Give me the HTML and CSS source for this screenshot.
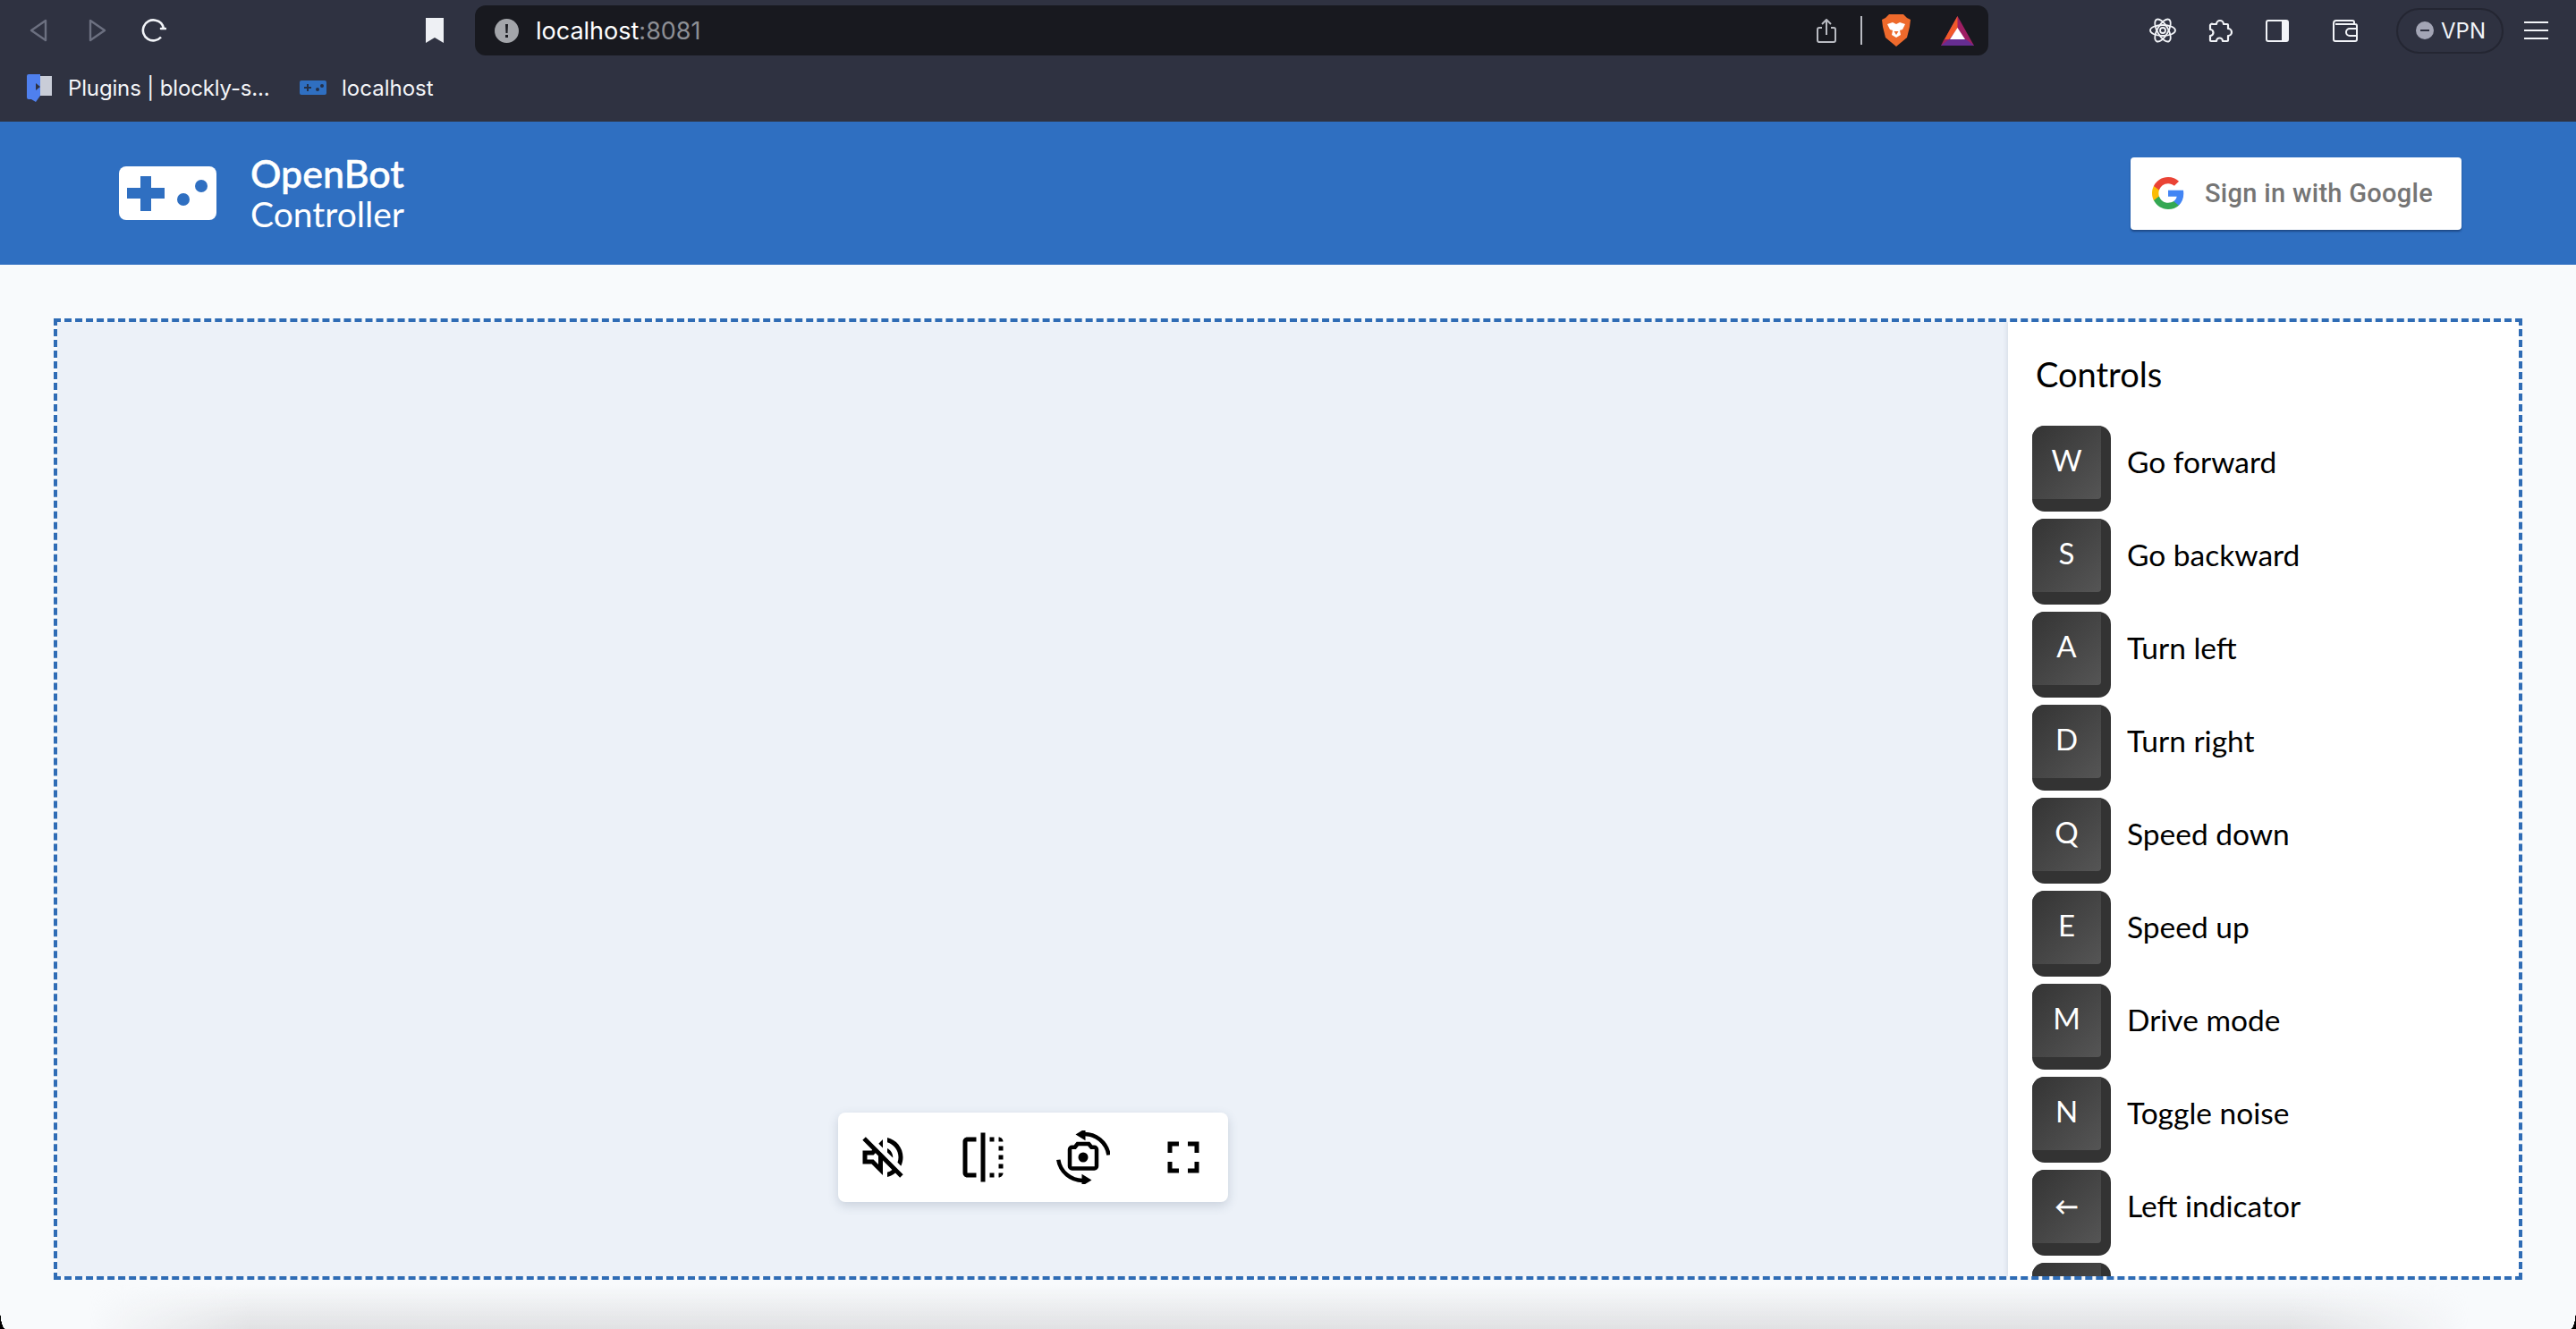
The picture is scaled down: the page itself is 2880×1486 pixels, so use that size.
FILE: index.html
```html
<!DOCTYPE html>
<html lang="en">
<head>
  <meta charset="UTF-8">
  <title>OpenBot Controller</title>
  <link rel="stylesheet" href="styles.css">
</head>
<body>
  <div class="toolbar">
    <svg class="ic-back" width="22" height="28" viewBox="0 0 22 28" fill="none" stroke="#6c7080" stroke-width="2.4" stroke-linejoin="round"><path d="M19 3v22L3 14z"/></svg>
    <svg class="ic-forward" width="22" height="28" viewBox="0 0 22 28" fill="none" stroke="#6c7080" stroke-width="2.4" stroke-linejoin="round"><path d="M3 3v22l16-11z"/></svg>
    <svg class="ic-reload" width="28" height="28" viewBox="0 0 28 28" fill="none" stroke="#f2f4f8" stroke-width="2.6"><path d="M22 21.5A11.5 11.5 0 1 1 16 2.7a11.5 11.5 0 0 1 9 9.3"/><path d="M22 12h5" stroke-linecap="round"/></svg>
    <svg class="ic-bookmark" width="20" height="28" viewBox="0 0 20 28"><path d="M0 0h20v28l-10-6-10 6z" fill="#eef0f4"/></svg>
    <div class="urlbar">
      <svg class="ic-alert" width="27" height="27" viewBox="0 0 27 27"><circle cx="13.500" cy="13.500" r="13.500" fill="#a3a5aa"/><path d="M12 6h3l-.5 10h-2zM12 18h3v3h-3z" fill="#1a1b21"/></svg>
      <span class="url-text">localhost<span class="url-port">:8081</span></span>
      <svg class="ic-share" width="22" height="27" viewBox="0 0 22 27" fill="none" stroke="#b9bbc2" stroke-width="2" stroke-linejoin="round"><path d="M6 10H3a2 2 0 0 0-2 2v12a2 2 0 0 0 2 2h16a2 2 0 0 0 2-2V12a2 2 0 0 0-2-2h-3"/><path d="M11 18V2M6 6l5-5 5 5"/></svg>
      <span class="url-divider"></span>
      <svg class="ic-brave" width="32" height="36" viewBox="0 0 32 36"><path d="M8 0h16l4 4 4 2-1 8-3 12-12 10-12-10L1 14 0 6l4-2z" fill="#ee6a2c"/><path d="M6 11l6-2 4 2 4-2 6 2-3 6-3 1 1 5-5 3-5-3 1-5-3-1z" fill="#fff"/><path d="M13.500 19h5L16 23z" fill="#ee6a2c"/></svg>
      <svg class="ic-bat" width="37" height="33" viewBox="0 0 37 33"><path d="M18.500 0 37 33H0z" fill="#9e1f63"/><path d="M18.500 0v14L9 26H3.500L0 33z" fill="#f1592a"/><path d="M0 33l9-7h19l9 7z" fill="#662d91"/><path d="M18.500 13 27 26H10z" fill="#fff"/></svg>
    </div>
    <svg class="ic-react" width="30" height="30" viewBox="0 0 30 30" fill="none" stroke="#f2f4f8" stroke-width="1.800"><ellipse cx="15" cy="15" rx="14" ry="6"/><ellipse cx="15" cy="15" rx="14" ry="6" transform="rotate(60 15 15)"/><ellipse cx="15" cy="15" rx="14" ry="6" transform="rotate(120 15 15)"/><circle cx="15" cy="15" r="3"/></svg>
    <svg class="ic-puzzle" width="28" height="27" viewBox="0 0 28 27" fill="none" stroke="#f2f4f8" stroke-width="2.200" stroke-linejoin="round"><path d="M6 6h4a4 4 0 1 1 8 0h4a1 1 0 0 1 1 1v4a4 4 0 1 1 0 8v5a1 1 0 0 1-1 1h-5a3.500 3.500 0 1 0-7 0H4a1 1 0 0 1-1-1v-5a3.500 3.500 0 1 0 0-7V8a2 2 0 0 1 3-2z"/></svg>
    <svg class="ic-sidebar" width="26" height="25" viewBox="0 0 26 25"><rect x="1" y="1" width="24" height="23" rx="2" fill="none" stroke="#f2f4f8" stroke-width="2"/><rect x="18" y="1" width="7" height="23" fill="#f2f4f8"/></svg>
    <svg class="ic-wallet" width="28" height="25" viewBox="0 0 28 25" fill="none" stroke="#f2f4f8" stroke-width="2"><path d="M3 5h22a2 2 0 0 1 2 2v15a2 2 0 0 1-2 2H3a2 2 0 0 1-2-2V4a3 3 0 0 1 3-3h18a2 2 0 0 1 2 2v2"/><path d="M27 10H19a3 3 0 0 0 0 8h8"/></svg>
    <div class="vpn">
      <span class="vpn-dot"></span>
      <span>VPN</span>
    </div>
    <div class="ic-menu"><span></span><span></span><span></span></div>
  </div>

  <div class="bookmarks">
    <svg width="28" height="31" viewBox="0 0 28 31"><path d="M2 0h13v24l-5 7-5-3H2a2 2 0 0 1-2-2V2a2 2 0 0 1 2-2z" fill="#4f80ee"/><rect x="15" y="2" width="13" height="22" fill="#c9cdd8"/><path d="M10 10l5 4-5 4z" fill="#2f3241"/></svg>
    <span class="bm-text bm-first">Plugins | blockly-s...</span>
    <svg class="bm-game" width="30" height="16" viewBox="0 0 30 16"><rect width="30" height="16" rx="2" fill="#2f6fc1"/><path d="M5 7h3V4h2v3h3v2h-3v3H8V9H5z" fill="#243047"/><circle cx="20" cy="10" r="2" fill="#243047"/><circle cx="25" cy="6" r="2" fill="#243047"/></svg>
    <span class="bm-text">localhost</span>
  </div>

  <header class="app-header">
    <div class="brand">
      <svg width="109" height="60" viewBox="0 0 109 60"><rect width="109" height="60" rx="8" fill="#fff"/><path d="M24 11h12v13h15v12H36v14H24V36H9V24h15z" fill="#2f6fc1"/><circle cx="72" cy="37" r="7" fill="#2f6fc1"/><circle cx="92" cy="22" r="7" fill="#2f6fc1"/></svg>
      <div class="brand-text">
        <div class="brand-name">OpenBot</div>
        <div class="brand-sub">Controller</div>
      </div>
    </div>
    <button class="google-btn">
      <svg width="36" height="36" viewBox="0 0 18 18"><path d="M17.640 9.200c0-.637-.057-1.251-.164-1.840H9v3.481h4.844c-.209 1.125-.843 2.078-1.796 2.717v2.258h2.908c1.702-1.567 2.684-3.874 2.684-6.615z" fill="#4285f4"/><path d="M9 18c2.430 0 4.467-.806 5.956-2.180l-2.908-2.259c-.806.540-1.837.860-3.048.860-2.344 0-4.328-1.584-5.036-3.711H.957v2.332C2.438 15.983 5.482 18 9 18z" fill="#34a853"/><path d="M3.964 10.710c-.180-.540-.282-1.117-.282-1.710s.102-1.170.282-1.710V4.958H.957C.347 6.173 0 7.548 0 9s.348 2.827.957 4.042l3.007-2.332z" fill="#fbbc05"/><path d="M9 3.580c1.321 0 2.508.454 3.440 1.345l2.582-2.580C13.463.891 11.426 0 9 0 5.482 0 2.438 2.017.957 4.958L3.964 7.290C4.672 5.163 6.656 3.580 9 3.580z" fill="#ea4335"/></svg>
      <span>Sign in with Google</span>
    </button>
  </header>

  <main class="drop-box">
    <section class="stage">
      <div class="video-controls">
        <svg width="60" height="60" viewBox="0 0 24 24"><path d="M4.340 2.930 2.930 4.340 7.290 8.700 7 9H3v6h4l5 5v-6.590l4.180 4.180c-.650.490-1.380.880-2.180 1.110v2.060c1.340-.300 2.570-.920 3.610-1.750l2.050 2.050 1.410-1.410L4.340 2.930zM10 15.170 7.830 13H5v-2h2.830l.880-.880L10 11.410v3.760zM19 12c0 .820-.150 1.610-.410 2.340l1.530 1.530c.560-1.170.880-2.480.880-3.870 0-4.280-2.990-7.860-7-8.770v2.060c2.890.860 5 3.540 5 6.710zm-7-8-1.880 1.880L12 7.760zm4.500 8c0-1.770-1.020-3.290-2.500-4.030v1.790l2.480 2.480c.010-.080.020-.160.020-.240z"/></svg>
        <svg width="60" height="60" viewBox="0 0 24 24"><path d="M15 21h2v-2h-2v2zm4-12h2V7h-2v2zM3 5v14c0 1.100.900 2 2 2h4v-2H5V5h4V3H5c-1.100 0-2 .900-2 2zm16-2v2h2c0-1.100-.900-2-2-2zm-8 20h2V1h-2v22zm8-6h2v-2h-2v2zM15 5h2V3h-2v2zm4 8h2v-2h-2v2zm0 8c1.100 0 2-.900 2-2h-2v2z"/></svg>
        <svg width="60" height="60" viewBox="0 0 24 24"><path d="M9.500 6h5l1.200 1.500H17a1 1 0 0 1 1 1V16a1 1 0 0 1-1 1H7a1 1 0 0 1-1-1V8.500a1 1 0 0 1 1-1h1.300z" fill="none" stroke="#000" stroke-width="1.800"/><circle cx="12" cy="12" r="2.200"/><path d="M23.400 11A11 11 0 0 0 12 1.600M.9 13.100A11 11 0 0 0 12 22.400" fill="none" stroke="#000" stroke-width="1.800"/><path d="M13 4.500V-.9L8.600 1.800zM11.400 19.500v5.400l4.400-2.700z"/></svg>
        <svg width="60" height="60" viewBox="0 0 24 24"><path d="M7 14H5v5h5v-2H7v-3zm-2-4h2V7h3V5H5v5zm12 7h-3v2h5v-5h-2v3zM14 5v2h3v3h2V5h-5z"/></svg>
      </div>
    </section>
    <aside class="controls-panel">
      <h2 class="controls-title">Controls</h2>
      <div class="control-row"><div class="key"><div class="key-face">W</div></div><span>Go forward</span></div>
      <div class="control-row"><div class="key"><div class="key-face">S</div></div><span>Go backward</span></div>
      <div class="control-row"><div class="key"><div class="key-face">A</div></div><span>Turn left</span></div>
      <div class="control-row"><div class="key"><div class="key-face">D</div></div><span>Turn right</span></div>
      <div class="control-row"><div class="key"><div class="key-face">Q</div></div><span>Speed down</span></div>
      <div class="control-row"><div class="key"><div class="key-face">E</div></div><span>Speed up</span></div>
      <div class="control-row"><div class="key"><div class="key-face">M</div></div><span>Drive mode</span></div>
      <div class="control-row"><div class="key"><div class="key-face">N</div></div><span>Toggle noise</span></div>
      <div class="control-row"><div class="key"><div class="key-face key-arrow">←</div></div><span>Left indicator</span></div>
      <div class="control-row"><div class="key"><div class="key-face"></div></div></div>
    </aside>
  </main>

  <div class="page-below"></div>
  <div class="corner corner-left"></div>
  <div class="corner corner-right"></div>
</body>
</html>
```

FILE: styles.css
```css
* {
  margin: 0;
  padding: 0;
  box-sizing: border-box;
}
html, body {
  height: 100%;
}
body {
  font-family: Lato, sans-serif;
  background: #f8fafc;
  color: #000;
  overflow: hidden;
  position: relative;
}
svg {
  display: block;
  flex: none;
}

/* browser bar */
.toolbar {
  height: 68px;
  display: flex;
  align-items: center;
  background: #2f3241;
  padding-left: 32px;
}
.ic-forward { margin-left: 44px; }
.ic-reload { margin-left: 38px; }
.ic-bookmark { margin-left: 290px; }
.urlbar {
  margin-left: 35px;
  width: 1692px;
  height: 56px;
  background: #18191f;
  border-radius: 12px;
  display: flex;
  align-items: center;
  padding-left: 22px;
  font-family: Inter, sans-serif;
}
.url-text {
  margin-left: 19px;
  font-size: 27px;
  color: #fff;
  flex: 1;
}
.url-port { color: #8d8f95; }
.url-divider {
  width: 2px;
  height: 32px;
  background: #b9bbc2;
  margin-left: 27px;
}
.ic-brave { margin-left: 22px; }
.ic-bat { margin-left: 34px; margin-right: 16px; }
.ic-react { margin-left: 180px; }
.ic-puzzle { margin-left: 35px; }
.ic-sidebar { margin-left: 37px; }
.ic-wallet { margin-left: 49px; }
.vpn {
  margin-left: 43px;
  width: 120px;
  height: 51px;
  border: 2px solid #242632;
  border-radius: 26px;
  display: flex;
  align-items: center;
  padding-left: 20px;
  gap: 8px;
  font-family: Inter, sans-serif;
  font-size: 24px;
  color: #f2f4f8;
}
.vpn-dot {
  width: 20px;
  height: 20px;
  border-radius: 50%;
  background: #a3a5b5;
  position: relative;
}
.vpn-dot::after {
  content: "";
  position: absolute;
  left: 5px;
  top: 9px;
  width: 10px;
  height: 2px;
  background: #2f3241;
}
.ic-menu {
  margin-left: 23px;
  width: 27px;
  height: 20px;
  display: flex;
  flex-direction: column;
  justify-content: space-between;
}
.ic-menu span {
  height: 2px;
  background: #f2f4f8;
}

.bookmarks {
  height: 68px;
  display: flex;
  align-items: center;
  background: #2f3241;
  padding-left: 30px;
  padding-bottom: 8px;
}
.bm-text {
  font-family: Inter, sans-serif;
  font-size: 24px;
  color: #f4f5f8;
}
.bm-first {
  margin-left: 18px;
  width: 259px;
  white-space: nowrap;
  letter-spacing: -0.15px;
}
.bm-game { margin-right: 17px; }

/* app header */
.app-header {
  height: 160px;
  background: #2f6fc1;
  display: flex;
  align-items: center;
  justify-content: space-between;
  padding: 0 128px 0 133px;
}
.brand {
  display: flex;
  align-items: center;
  gap: 38px;
  color: #fff;
}
.brand-name {
  font-size: 43px;
  font-weight: 500;
  line-height: 46px;
  -webkit-text-stroke: 0.5px #fff;
}
.brand-sub {
  font-size: 39px;
  line-height: 44px;
}
.google-btn {
  width: 370px;
  height: 81px;
  background: #fff;
  border: none;
  border-radius: 4px;
  box-shadow: 0 2px 2px rgba(20, 50, 100, 0.6);
  display: flex;
  align-items: center;
  gap: 23px;
  padding-left: 24px;
  font-family: Roboto, sans-serif;
  font-size: 29px;
  font-weight: 500;
  letter-spacing: 0.3px;
  color: #757575;
}

/* video area + controls */
.drop-box {
  margin: 60px 60px 0;
  height: 1075px;
  border: 4px dashed #2f6cb5;
  display: flex;
  overflow: hidden;
}
.stage {
  flex: 1;
  background: #ecf1f8;
  position: relative;
}
.video-controls {
  position: absolute;
  left: 50%;
  bottom: 83px;
  transform: translateX(-50%);
  width: 436px;
  height: 100px;
  padding: 0 20px;
  background: #fff;
  border-radius: 8px;
  box-shadow: 0 4px 12px rgba(60, 80, 110, 0.2);
  display: flex;
  align-items: center;
  justify-content: space-between;
}
.controls-panel {
  width: 571px;
  background: #fff;
  padding: 29px 0 0 27px;
  box-shadow: -2px 0 4px rgba(60, 80, 110, 0.1);
  position: relative;
}
.controls-title {
  font-size: 38px;
  font-weight: 400;
  line-height: 58px;
  margin: 0 0 29px 4px;
}
.control-row {
  display: flex;
  gap: 18px;
  margin-bottom: 8px;
  font-size: 33.5px;
  line-height: 81px;
}
.key {
  width: 88px;
  height: 96px;
  flex: none;
  background: #333;
  border-radius: 14px;
  overflow: hidden;
}
.key-face {
  width: 77px;
  height: 82px;
  background: linear-gradient(135deg, #343434, #555);
  border-bottom-right-radius: 4px;
  color: #fff;
  font-size: 33px;
  line-height: 76px;
  text-align: center;
}
.key-arrow {
  font-size: 26px;
  line-height: 80px;
  -webkit-text-stroke: 0.7px #fff;
}

/* rest of the page, cut off by the window */
.page-below {
  margin-top: 6px;
  height: 49px;
  background: linear-gradient(to bottom, rgba(224, 225, 227, 0), #e0e1e3);
  -webkit-mask-image: linear-gradient(to right, transparent 100px, #000 280px, #000 2560px, transparent 2760px);
  mask-image: linear-gradient(to right, transparent 100px, #000 280px, #000 2560px, transparent 2760px);
}
.corner {
  position: absolute;
  bottom: 0;
  width: 6px;
  height: 24px;
}
.corner-left {
  left: 0;
  background: radial-gradient(ellipse 6px 24px at 100% 0, transparent 98%, #000 100%);
}
.corner-right {
  right: 0;
  background: radial-gradient(ellipse 6px 24px at 0 0, transparent 98%, #000 100%);
}
```
